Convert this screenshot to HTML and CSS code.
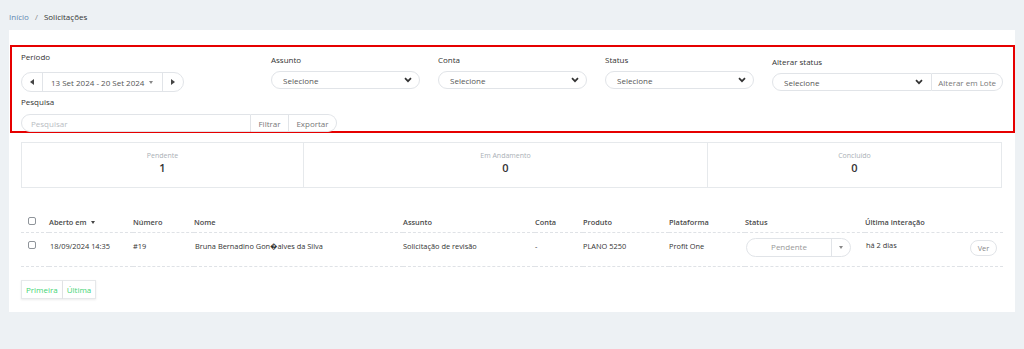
FILE: index.html
```html
<!DOCTYPE html>
<html>

<head>
    <title>Solicitações</title>
    <link rel="stylesheet" href="styles.css">
</head>

<body>
    <div class="crumbs">
        <a href="#">Início</a>
        <span class="sep">/</span>
        <span class="cur">Solicitações</span>
    </div>

    <div class="card">
        <div class="filters">
            <div class="field f-periodo">
                <label>Período</label>
                <div class="range">
                    <span class="arr">
                        <svg width="4" height="6" viewBox="0 0 4 6"><path d="M4 0 L0 3 L4 6 Z" fill="#444"/></svg>
                    </span>
                    <span class="dates">13 Set 2024 - 20 Set 2024 <i class="caret"></i></span>
                    <span class="arr">
                        <svg width="4" height="6" viewBox="0 0 4 6"><path d="M0 0 L4 3 L0 6 Z" fill="#444"/></svg>
                    </span>
                </div>
            </div>
            <div class="field f-mid">
                <label>Assunto</label>
                <div class="select">Selecione <svg class="chev" width="8" height="6" viewBox="0 0 8 6"><path d="M1 1.2 L4 4.2 L7 1.2" fill="none" stroke="#333" stroke-width="1.7"/></svg></div>
            </div>
            <div class="field f-mid">
                <label>Conta</label>
                <div class="select">Selecione <svg class="chev" width="8" height="6" viewBox="0 0 8 6"><path d="M1 1.2 L4 4.2 L7 1.2" fill="none" stroke="#333" stroke-width="1.7"/></svg></div>
            </div>
            <div class="field f-mid">
                <label>Status</label>
                <div class="select">Selecione <svg class="chev" width="8" height="6" viewBox="0 0 8 6"><path d="M1 1.2 L4 4.2 L7 1.2" fill="none" stroke="#333" stroke-width="1.7"/></svg></div>
            </div>
            <div class="field f-last">
                <label>Alterar status</label>
                <div class="group">
                    <div class="select joined">Selecione <svg class="chev" width="8" height="6" viewBox="0 0 8 6"><path d="M1 1.2 L4 4.2 L7 1.2" fill="none" stroke="#333" stroke-width="1.7"/></svg></div>
                    <button class="gbtn last">Alterar em Lote</button>
                </div>
            </div>

            <div class="field f-search">
                <label>Pesquisa</label>
                <div class="group search">
                    <input type="text" placeholder="Pesquisar">
                    <button class="gbtn">Filtrar</button>
                    <button class="gbtn last">Exportar</button>
                </div>
            </div>
        </div>

        <div class="stats">
            <div class="stat s1">
                <span class="lbl">Pendente</span>
                <span class="val">1</span>
            </div>
            <div class="stat s2">
                <span class="lbl">Em Andamento</span>
                <span class="val">0</span>
            </div>
            <div class="stat s3">
                <span class="lbl">Concluído</span>
                <span class="val">0</span>
            </div>
        </div>

        <table class="list">
            <colgroup>
                <col style="width:28px">
                <col style="width:84px">
                <col style="width:61px">
                <col style="width:209px">
                <col style="width:132px">
                <col style="width:48px">
                <col style="width:86px">
                <col style="width:76px">
                <col style="width:120px">
                <col style="width:95px">
                <col style="width:43px">
            </colgroup>
            <thead>
                <tr>
                    <th><span class="cb"></span></th>
                    <th>Aberto em <i class="sort"></i></th>
                    <th>Número</th>
                    <th>Nome</th>
                    <th>Assunto</th>
                    <th>Conta</th>
                    <th>Produto</th>
                    <th>Plataforma</th>
                    <th>Status</th>
                    <th>Última interação</th>
                    <th></th>
                </tr>
            </thead>
            <tbody>
                <tr>
                    <td><span class="cb"></span></td>
                    <td>18/09/2024 14:35</td>
                    <td>#19</td>
                    <td>Bruna Bernadino Gon&#xFFFD;alves da Silva</td>
                    <td>Solicitação de revisão</td>
                    <td>-</td>
                    <td>PLANO 5250</td>
                    <td>Profit One</td>
                    <td>
                        <div class="status">
                            <span class="st-txt">Pendente</span>
                            <span class="st-dd"><i class="caret"></i></span>
                        </div>
                    </td>
                    <td class="ago">há 2 dias</td>
                    <td class="act"><button class="ver">Ver</button></td>
                </tr>
            </tbody>
        </table>

        <div class="pager">
            <button>Primeira</button>
            <button>Última</button>
        </div>
    </div>
</body>

</html>
```

FILE: styles.css
```css
* {
    box-sizing: border-box;
}

body {
    margin: 0;
    background-color: #edf1f4;
    font-family: "Open Sans", "DejaVu Sans", sans-serif;
    font-size: 8px;
    color: #333;
}

button,
input {
    font-family: inherit;
    font-size: 8px;
}

.crumbs {
    height: 30px;
    padding: 12px 9px 0;
    line-height: 10px;
}

.crumbs a {
    color: #5f86b0;
    text-decoration: none;
}

.crumbs .sep {
    color: #888;
    margin: 0 4px;
}

.crumbs .cur {
    color: #333;
}

.card {
    background-color: #fff;
    margin: 0 9px;
    height: 282px;
    padding-top: 15px;
}

/* filtros */

.filters {
    margin-left: 1px;
    height: 88px;
    border: 2px solid #e60000;
    padding: 5px 10px 0 9px;
    display: grid;
    grid-template-columns: 232px 149px 149px 149px 231px;
    column-gap: 18px;
    align-items: start;
}

.field label {
    display: block;
    line-height: 10px;
    color: #333;
    margin-bottom: 6px;
}

.f-periodo label {
    margin-bottom: 10px;
}

.f-mid {
    padding-top: 3px;
}

.f-last {
    padding-top: 5px;
}

.f-search {
    grid-column: 1 / 3;
    margin-top: 5px;
}

.f-search label {
    margin-bottom: 7px;
}

.range {
    display: inline-flex;
    height: 20px;
    border: 1px solid #e1e4e8;
    border-radius: 10px;
    align-items: stretch;
}

.range .arr {
    width: 20px;
    display: flex;
    align-items: center;
    justify-content: center;
}

.range .arr:last-child {
    width: 21px;
    border-left: 1px solid #e1e4e8;
}

.range .dates {
    width: 120px;
    border-left: 1px solid #e1e4e8;
    display: flex;
    align-items: center;
    padding-left: 8px;
    color: #555;
}

.caret {
    display: inline-block;
    width: 0;
    height: 0;
    border-left: 2.5px solid transparent;
    border-right: 2.5px solid transparent;
    border-top: 3px solid #888;
    margin-left: 5px;
}

.select {
    height: 18px;
    border: 1px solid #e1e4e8;
    border-radius: 10px;
    display: flex;
    align-items: center;
    justify-content: space-between;
    padding: 0 7px 0 11px;
    color: #555;
}

.group {
    display: flex;
    height: 18px;
}

.group .joined {
    flex: 1;
    border-radius: 10px 0 0 10px;
    padding-right: 8px;
}

.gbtn {
    height: 18px;
    padding: 0 6px;
    border: 1px solid #e1e4e8;
    border-left: none;
    background-color: #fff;
    color: #777;
}

.gbtn.last {
    border-radius: 0 10px 10px 0;
}

.search input {
    width: 230px;
    height: 18px;
    border: 1px solid #e1e4e8;
    border-radius: 10px 0 0 10px;
    padding: 0 9px;
    outline: none;
}

.search input::placeholder {
    color: #b8bcc2;
}

.search .gbtn {
    width: 38px;
    padding: 0;
}

.search .gbtn.last {
    width: 48px;
}

/* contadores */

.stats {
    display: flex;
    margin: 9px 13px 0 12px;
    height: 46px;
    border: 1px solid #e6e9ec;
}

.stat {
    display: flex;
    flex-direction: column;
    align-items: center;
    padding-top: 8px;
}

.s1 {
    width: 281px;
}

.s2 {
    width: 405px;
    border-left: 1px solid #e6e9ec;
    border-right: 1px solid #e6e9ec;
}

.s3 {
    flex: 1;
}

.stat .lbl {
    font-size: 7px;
    line-height: 10px;
    color: #aab0b6;
}

.stat .val {
    font-size: 11px;
    line-height: 14px;
    font-weight: 600;
    color: #333;
}

/* tabela */

.list {
    margin: 21px 0 0 12px;
    width: 982px;
    table-layout: fixed;
    border-collapse: collapse;
    font-size: 7.4px;
}

.list th,
.list td {
    text-align: left;
    padding: 0;
    white-space: nowrap;
}

.list th {
    height: 23px;
    font-weight: 600;
    color: #4a4a4a;
    vertical-align: top;
    line-height: 10px;
    padding-top: 8px;
    border-bottom: 1px dashed #dfe2e6;
}

.list td {
    height: 34px;
    vertical-align: top;
    line-height: 10px;
    padding-top: 8px;
    border-bottom: 1px dashed #dfe2e6;
}

.list td:nth-child(2),
.list td:nth-child(4) {
    padding-left: 1px;
}

.cb {
    display: inline-block;
    width: 8px;
    height: 8px;
    margin-left: 7px;
    border: 1px solid #8f949a;
    border-radius: 2px;
}

.sort {
    display: inline-block;
    width: 0;
    height: 0;
    border-left: 2.5px solid transparent;
    border-right: 2.5px solid transparent;
    border-top: 3px solid #444;
    margin-left: 2px;
    vertical-align: 1px;
}

.status {
    display: flex;
    width: 105px;
    height: 19px;
    margin: -3px 0 0 1px;
    border: 1px solid #e1e4e8;
    border-radius: 10px;
    font-size: 8px;
}

.st-txt {
    width: 84px;
    display: flex;
    align-items: center;
    justify-content: center;
    color: #999;
}

.st-dd {
    flex: 1;
    border-left: 1px solid #e1e4e8;
    display: flex;
    align-items: center;
    justify-content: center;
}

.st-dd .caret {
    margin: 0;
}

.list td.ago {
    padding-top: 7px;
    padding-left: 1px;
}

.list td.act {
    text-align: right;
    padding-right: 6px;
}

.ver {
    width: 27px;
    height: 16px;
    margin-top: -1px;
    padding: 0;
    border: 1px solid #e1e4e8;
    border-radius: 8px;
    background-color: #fff;
    color: #888;
    font-size: 7.4px;
}

/* paginação */

.pager {
    display: flex;
    margin: 13px 0 0 12px;
}

.pager button {
    height: 19px;
    padding: 0 4px;
    background-color: #fff;
    border: 1px solid #e6e8ea;
    color: #3fd474;
    box-shadow: 0 1px 2px rgba(0, 0, 0, 0.08);
}

.pager button+button {
    border-left: none;
}
```
